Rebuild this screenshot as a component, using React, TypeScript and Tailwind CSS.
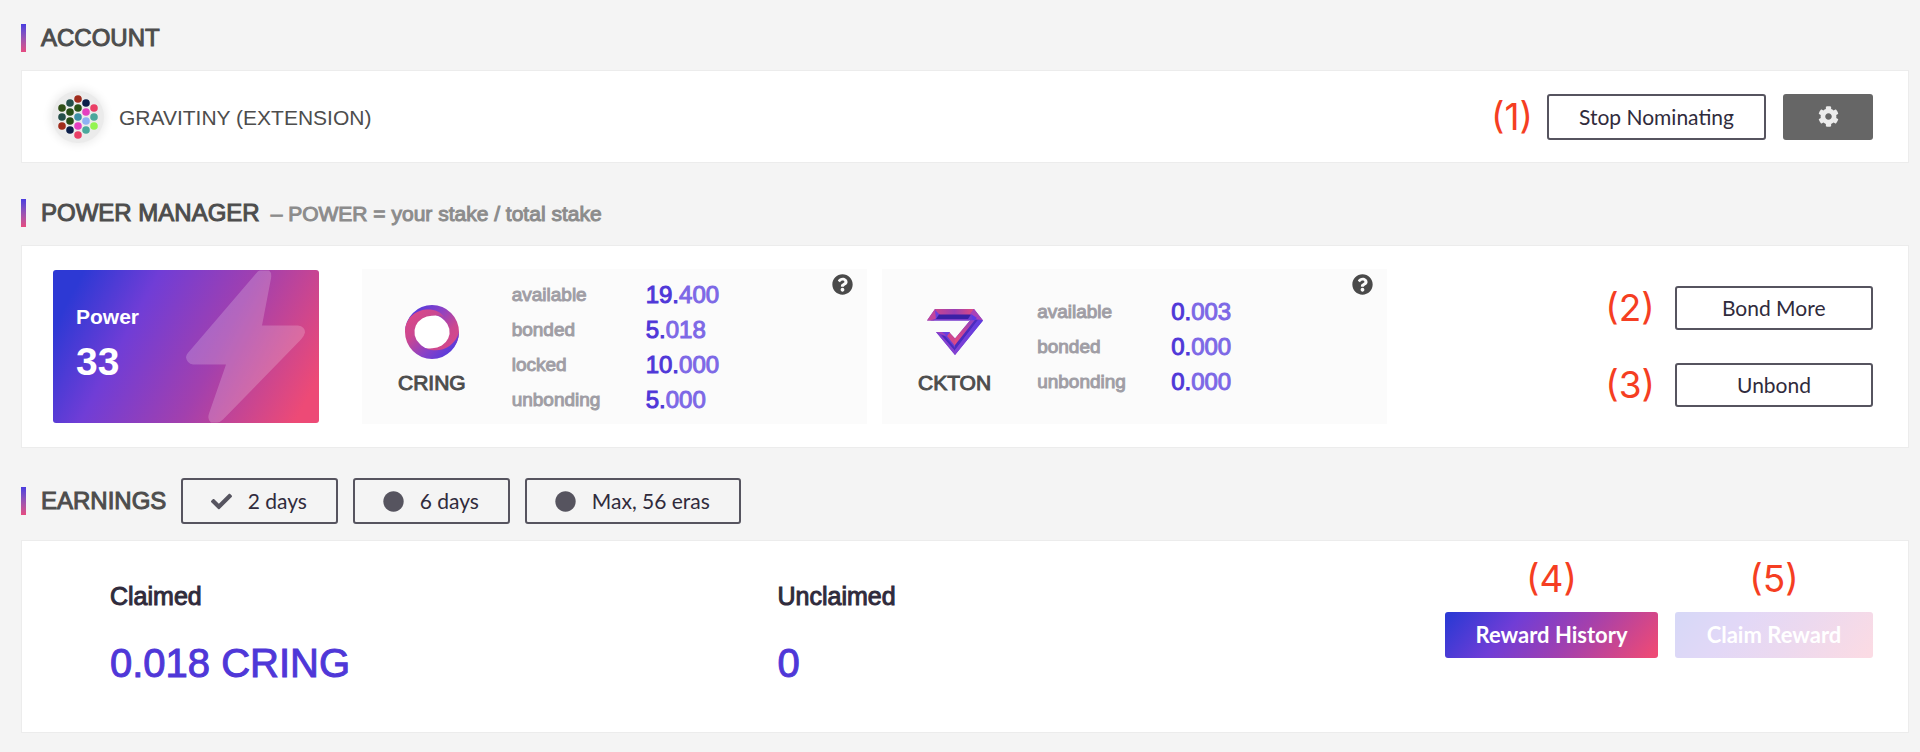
import type { ReactNode } from "react";
import { FaCheck, FaCircle, FaCog, FaQuestionCircle } from "react-icons/fa";

const identiconDots: [number, number, string][] = [
  [10, 17, "#2f4f17"],
  [10, 26, "#234e4a"],
  [10, 35, "#a02c1c"],
  [18, 12, "#234e4a"],
  [18, 21, "#264d17"],
  [18, 30, "#264d17"],
  [18, 39, "#0c1f4a"],
  [26, 8, "#a02c1c"],
  [26, 17, "#2a5218"],
  [26, 26, "#3c8fa6"],
  [26, 35, "#e53fc0"],
  [26, 44, "#ea3f66"],
  [34, 12, "#0c1f4a"],
  [34, 21, "#e53fc0"],
  [34, 30, "#8fb0f4"],
  [34, 39, "#4ba89c"],
  [42, 17, "#ea3f66"],
  [42, 26, "#4ba89c"],
  [42, 35, "#93f452"],
];

function Identicon() {
  return (
    <svg viewBox="0 0 52 52" className="size-[52px] rounded-full bg-[#ebebeb] shadow-[0_0_8px_2px_#ececec]" aria-hidden="true">
      {identiconDots.map(([x, y, color]) => (
        <circle key={`${x}-${y}`} cx={x} cy={y} r="3.8" fill={color} />
      ))}
    </svg>
  );
}

const ringBand =
  "M0 27 A27 27 0 0 1 54 27 C54 42 42 49.5 31 49.5 C24 49.5 18 47 14.5 41.2 A17.3 16.2 0 0 0 27 43.2 A17.3 16.2 0 0 0 39.5 15.5 C28 3 5 8 0 27 Z";

function RingLogo() {
  return (
    <svg viewBox="0 0 54 54" className="size-[54px]" aria-hidden="true">
      <defs>
        <linearGradient id="ring" gradientUnits="userSpaceOnUse" x1="6" y1="8" x2="42" y2="46">
          <stop offset="0" stopColor="#573bdc" />
          <stop offset="0.35" stopColor="#8a41c6" />
          <stop offset="0.75" stopColor="#cb4790" />
          <stop offset="1" stopColor="#d6488a" />
        </linearGradient>
      </defs>
      <circle cx="27" cy="27" r="17" fill="#fff" />
      <path d={ringBand} fill="url(#ring)" />
      <path d={ringBand} fill="url(#ring)" transform="rotate(180 27 27)" />
    </svg>
  );
}

function KtonLogo() {
  return (
    <svg viewBox="0 0 56 46" className="h-[46px] w-14" aria-hidden="true">
      <defs>
        <linearGradient id="ktonTop" x1="0" y1="0" x2="1" y2="0">
          <stop offset="0" stopColor="#c9458f" />
          <stop offset="0.5" stopColor="#9a3fb4" />
          <stop offset="1" stopColor="#e04a80" />
        </linearGradient>
        <linearGradient id="ktonInner" x1="1" y1="0" x2="0" y2="1">
          <stop offset="0" stopColor="#8a40c8" />
          <stop offset="0.5" stopColor="#c4469a" />
          <stop offset="1" stopColor="#e84c7c" />
        </linearGradient>
        <linearGradient id="ktonOuter" x1="1" y1="0" x2="0" y2="1">
          <stop offset="0" stopColor="#5d3ce0" />
          <stop offset="1" stopColor="#8441d4" />
        </linearGradient>
      </defs>
      <path d="M0 11.5 8 0H47L56 11.5 28 46 9 23H22L28 29.5 43 11.5Z" fill="#6a3dd6" />
      <path d="M8 0H47L43 6H12Z" fill="url(#ktonTop)" />
      <path d="M0 11.5 8 0 12 5 7 11.5Z" fill="#c2459c" />
      <path d="M8 1 13 6 9 10Z" fill="#6b3fdc" />
      <path d="M12 5.5H44L41 10H9Z" fill="#3a20a6" />
      <path d="M3 11.5 8 10H42V11.5Z" fill="#7d3cc8" />
      <path d="M47 0 56 11.5 49 10 43 5Z" fill="#a843b8" />
      <path d="M44 5 50 9 46 12Z" fill="#5a3ae6" />
      <path d="M43 11.5 48 11 28 37V29.5Z" fill="url(#ktonInner)" />
      <path d="M48 11 51 11 28 41V36Z" fill="#4b2bbd" />
      <path d="M51 11 56 11.5 28 46V41Z" fill="url(#ktonOuter)" />
      <path d="M22 23 28 29.5V37L20 27Z" fill="#d0478e" />
      <path d="M9 23H22L18 27Z" fill="#a142bc" />
      <path d="M15 23H23L20 27Z" fill="#6a40e0" />
      <path d="M14 26 18 27 28 39V42Z" fill="#4b2bbd" />
      <path d="M9 23 14 26 28 42V46Z" fill="#8541cf" />
    </svg>
  );
}

function Bolt() {
  return (
    <svg viewBox="0 0 120 152" className="absolute inset-y-0 right-[13px] h-full w-[120px]" aria-hidden="true">
      <path
        d="M74 0H83Q86 2 85 8L76 55H112Q119 56 119 62Q118 66 115 69L37 149Q34 152 31 152H25Q21 149 23 143L40 94H7Q1 93 0 87Q0 84 4 80L70 3Q72 0 74 0Z"
        fill="#fff"
        fillOpacity="0.2"
      />
    </svg>
  );
}

function SectionTitle({ title, children }: { title: string; children?: ReactNode }) {
  return (
    <header className="flex items-center">
      <span className="mr-[15px] h-7 w-[5px] bg-linear-to-b from-[#4a3be0] to-[#e64a80]" />
      <h2 className="text-2xl leading-7 text-[#4d4d4d] [-webkit-text-stroke:1px_currentColor]">{title}</h2>
      {children}
    </header>
  );
}

function Card({ className, children }: { className: string; children: ReactNode }) {
  return <div className={`flex border border-[#ececec] bg-white pr-[35px] ${className}`}>{children}</div>;
}

function Marker({ children }: { children: ReactNode }) {
  return <span className="font-[Inter,sans-serif] text-[37px] leading-9 font-normal text-[#f53e22]">{children}</span>;
}

function OutlineButton({ className, children }: { className: string; children: ReactNode }) {
  return (
    <button
      type="button"
      className={`flex items-center justify-center rounded-[3px] border-2 border-[#56545f] font-[Lato,sans-serif] text-[21px] leading-7 text-[#302b3c] ${className}`}
    >
      {children}
    </button>
  );
}

interface Token {
  name: string;
  logo: ReactNode;
  rows: [string, string, string][];
}

const tokens: Token[] = [
  {
    name: "CRING",
    logo: <RingLogo />,
    rows: [
      ["available", "19.", "400"],
      ["bonded", "5.", "018"],
      ["locked", "10.", "000"],
      ["unbonding", "5.", "000"],
    ],
  },
  {
    name: "CKTON",
    logo: <KtonLogo />,
    rows: [
      ["available", "0.", "003"],
      ["bonded", "0.", "000"],
      ["unbonding", "0.", "000"],
    ],
  },
];

function TokenCard({ name, logo, rows }: Token) {
  return (
    <div className="relative flex h-[155px] w-[505px] items-center gap-[46px] bg-[#fbfbfb] pl-9">
      <div className="flex flex-col items-center pt-1.5">
        <div className="flex h-[54px] items-center">{logo}</div>
        <div className="mt-3 text-[21px] leading-6 text-[#4d4d4d] [-webkit-text-stroke:1px_currentColor]">{name}</div>
      </div>
      <dl className="grid grid-cols-[134px_auto]">
        {rows.map(([label, whole, fraction]) => (
          <div key={label} className="contents">
            <dt className="text-[19px] leading-[35px] text-[#a09ea5] [-webkit-text-stroke:1px_currentColor]">{label}</dt>
            <dd className="text-2xl leading-[35px] text-[#7d68e6] [-webkit-text-stroke:1px_currentColor]">
              <span className="text-[#4f37d8]">{whole}</span>
              {fraction}
            </dd>
          </div>
        ))}
      </dl>
      <button type="button" aria-label={`About ${name}`} className="absolute top-[5px] right-[14px] text-[21px] text-[#4a4a4a]">
        <FaQuestionCircle />
      </button>
    </div>
  );
}

function Stat({ label, value }: { label: string; value: string }) {
  return (
    <div className="w-1/2">
      <div className="text-[25px] leading-8 text-[#302b3c] [-webkit-text-stroke:1px_currentColor]">{label}</div>
      <div className="mt-[29px] text-[40px] leading-11 text-[#4f37d8] [-webkit-text-stroke:1px_currentColor]">{value}</div>
    </div>
  );
}

export default function App() {
  return (
    <main className="min-h-screen bg-[#f4f4f4] pt-6 pr-[11px] pb-[18px] pl-[21px] font-['Liberation_Sans',Arial,sans-serif]">
      <section>
        <SectionTitle title="ACCOUNT" />
        <Card className="mt-[18px] h-[93px] items-center pl-[30px]">
          <Identicon />
          <span className="ml-[15px] pt-0.5 text-[21px] leading-7 text-[#4d4d4d]">GRAVITINY (EXTENSION)</span>
          <div className="ml-auto flex items-center">
            <Marker>(1)</Marker>
            <OutlineButton className="ml-3.5 h-[46px] w-[219px]">Stop Nominating</OutlineButton>
            <button
              type="button"
              aria-label="Settings"
              className="ml-[17px] flex h-[46px] w-[90px] items-center justify-center rounded-[3px] bg-[#666] text-[21px] text-[#ececec]"
            >
              <FaCog />
            </button>
          </div>
        </Card>
      </section>

      <section className="mt-9">
        <SectionTitle title="POWER MANAGER">
          <span className="ml-[11px] pt-0.5 text-[21px] leading-6 text-[#8c8c8c] [-webkit-text-stroke:1px_currentColor]">
            – POWER = your stake / total stake
          </span>
        </SectionTitle>
        <Card className="mt-[18px] h-[203px] items-center pl-[31px]">
          <div className="relative h-[153px] w-[266px] shrink-0 overflow-hidden rounded-[3px] bg-[linear-gradient(118deg,#2d39d4_9%,#703dd6_31%,#a240ae_60%,#ed4a76_93%)] pt-[33px] pl-[23px] font-bold text-white">
            <Bolt />
            <div className="text-[21px] leading-7">Power</div>
            <div className="mt-[9px] text-[39px] leading-11">33</div>
          </div>
          <div className="ml-[43px] flex gap-[15px]">
            {tokens.map((token) => (
              <TokenCard key={token.name} {...token} />
            ))}
          </div>
          <div className="ml-auto flex flex-col gap-[33px]">
            <div className="flex items-center gap-5">
              <Marker>(2)</Marker>
              <OutlineButton className="h-[44px] w-[198px]">Bond More</OutlineButton>
            </div>
            <div className="flex items-center gap-5">
              <Marker>(3)</Marker>
              <OutlineButton className="h-[44px] w-[198px]">Unbond</OutlineButton>
            </div>
          </div>
        </Card>
      </section>

      <section className="mt-[30px]">
        <SectionTitle title="EARNINGS">
          <div className="ml-[15px] flex gap-[15px]">
            <OutlineButton className="h-[46px] w-[157px] gap-4 pr-0.5">
              <FaCheck className="text-[#56545f]" />
              2 days
            </OutlineButton>
            <OutlineButton className="h-[46px] w-[157px] gap-4 pr-0.5">
              <FaCircle className="text-[#56545f]" />
              6 days
            </OutlineButton>
            <OutlineButton className="h-[46px] w-[216px] gap-4 pr-0.5">
              <FaCircle className="text-[#56545f]" />
              Max, 56 eras
            </OutlineButton>
          </div>
        </SectionTitle>
        <Card className="mt-4 h-[193px] pl-[88px]">
          <div className="flex min-w-0 flex-1 pt-[39px]">
            <Stat label="Claimed" value="0.018 CRING" />
            <Stat label="Unclaimed" value="0" />
          </div>
          <div className="flex gap-[17px] pt-5 font-[Lato,sans-serif] text-[22px] leading-7 font-bold text-white">
            <div className="flex flex-col items-center gap-[15px]">
              <Marker>(4)</Marker>
              <button
                type="button"
                className="h-[46px] w-[213px] rounded-[3px] bg-[linear-gradient(130deg,#2d39d4_3%,#703dd6_31%,#a240ae_60%,#ed4a76_97%)]"
              >
                Reward History
              </button>
            </div>
            <div className="flex flex-col items-center gap-[15px]">
              <Marker>(5)</Marker>
              <button
                type="button"
                disabled
                className="h-[46px] w-[198px] rounded-[3px] bg-[linear-gradient(130deg,#d7d8f7_3%,#e2d8f7_31%,#ecd9ef_60%,#fbdbe4_97%)]"
              >
                Claim Reward
              </button>
            </div>
          </div>
        </Card>
      </section>
    </main>
  );
}
